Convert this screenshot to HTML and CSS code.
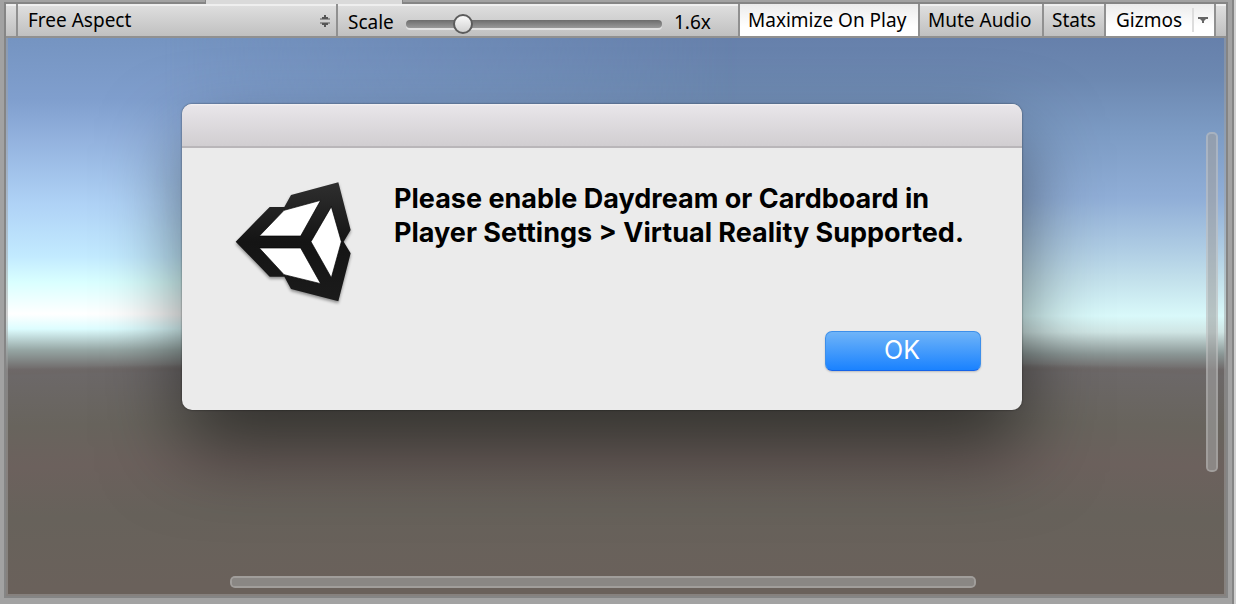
FILE: index.html
```html
<!DOCTYPE html>
<html lang="en">
<head>
<meta charset="utf-8">
<title>Game View</title>
<link rel="stylesheet" href="styles.css">
</head>
<body>
<div class="tab-strip"><div class="tab"></div></div>
<main class="panel">
  <div class="toolbar">
    <div class="aspect">
      <select class="aspect-select" aria-label="Aspect ratio"><option>Free Aspect</option></select>
      <svg class="aspect-arrows" viewBox="0 0 10 14" aria-hidden="true"><path d="M4 1h2v2h2v2H2V3h2zM2 9h6v2H6v2H4v-2H2z"/><path d="M0 4h10v2H0zM0 8h10v2H0z" opacity=".5"/></svg>
    </div>
    <div class="scale">
      <label for="scale">Scale</label>
      <input class="scale-range" id="scale" type="range" min="0" max="100" value="20">
      <output class="scale-value" for="scale">1.6x</output>
    </div>
    <button class="tool tool-max is-on" aria-pressed="true">Maximize On Play</button>
    <button class="tool tool-mute">Mute Audio</button>
    <button class="tool tool-stats">Stats</button>
    <button class="tool tool-gizmos is-on" aria-pressed="true">Gizmos
      <span class="gizmos-menu"><svg viewBox="0 0 10 6" aria-hidden="true"><path d="M0 0h10v2H8L6 4v2H4V4L2 2H0z"/></svg></span>
    </button>
  </div>
  <section class="view">
    <div class="sky-left"></div>
    <div class="ground"></div>
    <dialog class="alert" open aria-labelledby="message">
      <div class="alert-title"></div>
      <div class="alert-body">
        <svg class="logo" viewBox="0 0 450 435" aria-hidden="true">
          <defs><linearGradient id="shade" x1="0" y1="0" x2="0" y2="1"><stop offset="0" stop-color="#2f2f2f"/><stop offset=".5" stop-color="#141414"/><stop offset="1" stop-color="#1b1b1b"/></linearGradient></defs>
          <path class="logo-body" fill="url(#shade)" d="M47 215L149 111H193L213 75L355 37L392 180L371 215L392 250L355 394L213 357L193 320H149Z"/>
          <path class="logo-face" d="M118 198L192 121L302 91L242 198ZM118 234H242L302 341L192 314ZM273 215L334 110L364 215L334 323Z"/>
        </svg>
        <p class="message" id="message">Please enable Daydream or Cardboard in<br>Player Settings &gt; Virtual Reality Supported.</p>
      </div>
      <div class="alert-actions"><button class="ok">OK</button></div>
    </dialog>
    <div class="scrollbar scrollbar-y"></div>
    <div class="scrollbar scrollbar-x"></div>
  </section>
</main>
</body>
</html>
```
FILE: styles.css
```css
* { box-sizing: border-box; }

body {
  display: flex;
  flex-direction: column;
  min-height: 100vh;
  margin: 0;
  padding-bottom: 6px;
  border-right: 2px solid #d0d0d0;
  background: #a2a2a2;
  box-shadow: inset -2px 0 #858585;
  color: #000;
  font-family: "Noto Sans", sans-serif;
  font-size: 19px;
}

.tab-strip {
  height: 4px;
  margin: 0 6px 0 4px;
  background: linear-gradient(#a2a2a2 2px, #858585 2px);
}
.tab {
  width: 198px;
  height: 4px;
  margin-left: 201px;
  border: solid #858585;
  border-width: 0 1px;
  background: #dadada;
}

.panel {
  display: flex;
  flex: 1;
  flex-direction: column;
  margin: 0 6px 0 4px;
  border: 2px solid #858585;
  border-top: 0;
}

.toolbar {
  display: flex;
  height: 34px;
  padding: 0 10px;
  border-bottom: 2px solid #909090;
  background: linear-gradient(#efefef 2px, #dedede 2px, #c0c0c0);
}
.aspect {
  position: relative;
  width: 320px;
  border-left: 2px solid #909090;
}
.aspect-select {
  width: 100%;
  height: 32px;
  padding: 0 10px;
  border: 0;
  appearance: none;
  background: transparent;
  color: inherit;
  font: inherit;
}
.aspect-arrows {
  position: absolute;
  top: 10px;
  right: 6px;
  width: 10px;
  height: 14px;
  fill: #555;
}
.scale {
  display: flex;
  flex: 1;
  align-items: center;
  gap: 12px;
  padding: 4px 8px 0 10px;
  border-left: 2px solid #909090;
}
.scale label { width: 46px; }
.scale-value { width: 56px; }
.scale-range {
  flex: 1;
  min-width: 0;
  height: 20px;
  margin: 4px 0 0;
  appearance: none;
  background: transparent;
}
.scale-range::-webkit-slider-runnable-track {
  height: 8px;
  border-radius: 4px;
  background: linear-gradient(#6c6c6c, #999);
  box-shadow: 0 2px #e2e2e2;
}
.scale-range::-webkit-slider-thumb {
  width: 20px;
  height: 20px;
  margin-top: -6px;
  appearance: none;
  border: 2px solid #5c5c5c;
  border-radius: 50%;
  background: linear-gradient(#fafafa, #d2d2d2);
}

.tool {
  height: 32px;
  padding: 0 0 0 8px;
  border: 0;
  border-left: 2px solid #909090;
  background: transparent;
  color: inherit;
  font: inherit;
  text-align: left;
  white-space: nowrap;
}
.tool.is-on { background: linear-gradient(#ececec, #fff 70%); }
.tool-max { width: 180px; }
.tool-mute { width: 124px; }
.tool-stats { width: 62px; }
.tool-gizmos {
  display: flex;
  align-items: center;
  justify-content: space-between;
  width: 112px;
  padding: 0 6px 0 10px;
  border-right: 2px solid #909090;
}
.gizmos-menu {
  height: 24px;
  padding: 8px 0 0 4px;
  border-left: 2px solid #ddd;
  line-height: 0;
}
.gizmos-menu svg {
  width: 10px;
  height: 6px;
  fill: #666;
}

.view {
  position: relative;
  flex: 1;
  padding: 66px 204px 184px 176px;
  overflow: hidden;
  background: linear-gradient(#6680ab, #6c88b1 40px, #7c9bc4 94px, #90aed7 160px, #afcde4 212px, #c4e2ec 244px, #d9f9fa 278px, #cfe5e4 294px, #8b9796 316px, #6e6868 332px);
}
.sky-left {
  position: absolute;
  inset: 0;
  background: linear-gradient(#7594c1, #809fce 62px, #94b3df 104px, #afd2f6 166px, #c2eaff 218px, #d9ffff 244px, #fff 276px, #ddfdff 291px, #96a6a4 312px, #6e6868 332px);
  mask-image: linear-gradient(90deg, #000 12%, transparent 60%);
}
.ground {
  position: absolute;
  inset: 0;
  background: radial-gradient(5850px 1000px at 50% 1000px, #6a615b 0 46%, #67625b 53%, #6c615d 58%, #68645d 62%, #6c6868 67%, #6c6766 67.2%, transparent 67.8%);
}

.alert {
  position: relative;
  width: 100%;
  margin: 0;
  padding: 0 0 39px;
  border: 0;
  border-radius: 10px;
  background: #ebebeb;
  color: #000;
  box-shadow: 0 0 2px rgba(0, 0, 0, .6), 0 38px 80px rgba(0, 0, 0, .52);
  font-family: Inter, sans-serif;
}
.alert-title {
  height: 44px;
  border-bottom: 2px solid #b9b6b9;
  border-radius: 10px 10px 0 0;
  background: linear-gradient(#f4f2f4, #e8e5e9 2px, #d1ced1);
}
.alert-body {
  display: flex;
  gap: 24px;
  padding: 22px 40px 0 38px;
}
.logo {
  flex: none;
  width: 150px;
  height: 145px;
}
.logo-body { filter: drop-shadow(0 6px 5px rgba(0, 0, 0, .4)); }
.logo-face { fill: #fff; stroke: #000; stroke-width: 2; }
.message {
  margin: 12px 0 0;
  font-size: 27px;
  font-weight: 700;
  line-height: 34px;
  white-space: nowrap;
}
.alert-actions {
  display: flex;
  justify-content: flex-end;
  padding: 16px 41px 0;
}
.ok {
  width: 156px;
  height: 40px;
  padding: 0 2px 2px 0;
  border: 1px solid #3d8fea;
  border-bottom-color: #1663e8;
  border-radius: 7px;
  background: linear-gradient(#6fb4f8, #1a82ff);
  box-shadow: 0 1px 2px rgba(0, 0, 0, .2);
  color: #fff;
  font: 400 25px Inter, sans-serif;
}

.scrollbar {
  position: absolute;
  border: 2px solid rgba(190, 190, 190, .65);
  border-radius: 5px;
  background: rgba(160, 160, 160, .6);
  background-clip: padding-box;
}
.scrollbar-y {
  top: 94px;
  right: 8px;
  bottom: 124px;
  width: 12px;
}
.scrollbar-x {
  right: 250px;
  bottom: 8px;
  left: 224px;
  height: 12px;
}
.view::after {
  content: "";
  position: absolute;
  inset: 0;
  border: solid rgba(162, 162, 162, .5);
  border-width: 0 2px 2px;
}
```
